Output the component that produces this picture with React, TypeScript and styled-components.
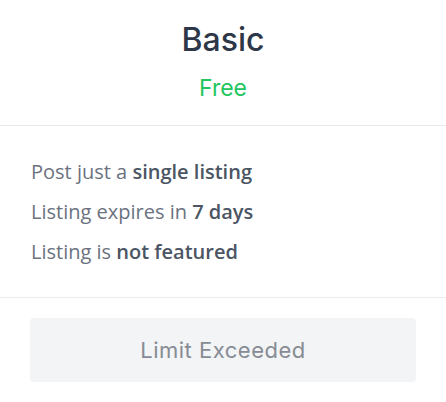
import React from 'react';
import styled, { createGlobalStyle } from 'styled-components';

const GlobalStyle = createGlobalStyle`
  html, body {
    margin: 0;
    padding: 0;
    background: #ffffff;
  }
  * {
    box-sizing: border-box;
  }
`;

const Card = styled.div`
  width: 446px;
  height: 402px;
  background: #ffffff;
  display: flex;
  flex-direction: column;
`;

const CardHeader = styled.div`
  display: flex;
  flex-direction: column;
  align-items: center;
  padding: 20px 0 21px;
  border-bottom: 1px solid #e9eaef;
  gap: 12px;
`;

const PlanTitle = styled.h2`
  margin: 0;
  font-family: 'Inter', 'Liberation Sans', sans-serif;
  font-size: 32px;
  line-height: 40px;
  font-weight: 500;
  color: #2d3748;
`;

const PlanPrice = styled.div`
  font-family: 'Inter', 'Liberation Sans', sans-serif;
  font-size: 23px;
  line-height: 32px;
  font-weight: 400;
  color: #22c55e;
`;

const FeatureList = styled.ul`
  list-style: none;
  margin: 0;
  padding: 26px 31px 25px;
  border-bottom: 1px solid #ececef;
  display: flex;
  flex-direction: column;
`;

const Feature = styled.li`
  font-family: 'Open Sans', 'Liberation Sans', sans-serif;
  font-size: 20px;
  line-height: 40px;
  color: #6b7280;

  strong {
    font-weight: 600;
    color: #4b5563;
  }
`;

const Footer = styled.div`
  padding: 20px 30px;
`;

const LimitButton = styled.button`
  width: 100%;
  height: 64px;
  border: none;
  border-radius: 4px;
  background: #f3f4f6;
  color: #868b94;
  font-family: 'Inter', 'Liberation Sans', sans-serif;
  font-size: 22px;
  letter-spacing: 0.5px;
  font-weight: 400;
  cursor: not-allowed;
`;

const features = [
  { text: 'Post just a ', bold: 'single listing' },
  { text: 'Listing expires in ', bold: '7 days' },
  { text: 'Listing is ', bold: 'not featured' },
];

const App: React.FC = () => {
  return (
    <>
      <GlobalStyle />
      <Card>
        <CardHeader>
          <PlanTitle>Basic</PlanTitle>
          <PlanPrice>Free</PlanPrice>
        </CardHeader>
        <FeatureList>
          {features.map((f) => (
            <Feature key={f.bold}>
              {f.text}
              <strong>{f.bold}</strong>
            </Feature>
          ))}
        </FeatureList>
        <Footer>
          <LimitButton disabled>Limit Exceeded</LimitButton>
        </Footer>
      </Card>
    </>
  );
};

export default App;
